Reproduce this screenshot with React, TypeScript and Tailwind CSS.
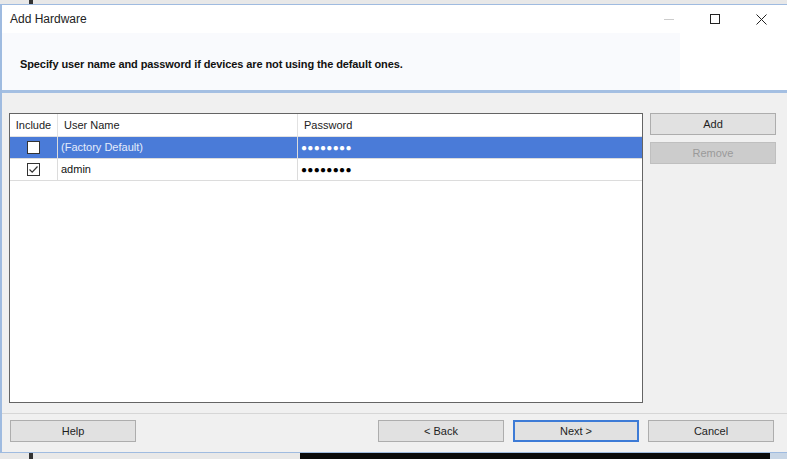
import React from "react";

const font = { fontFamily: '"Liberation Sans", Arial, sans-serif' };

function Checkbox({ checked }: { checked?: boolean }) {
  return (
    <div className="w-[13px] h-[13px] border border-[#333333] bg-white flex items-center justify-center">
      {checked && (
        <svg width="11" height="11" viewBox="0 0 11 11">
          <path d="M1.5 5.5 L4.2 8.2 L9.5 2.5" fill="none" stroke="#333333" strokeWidth="1.2" />
        </svg>
      )}
    </div>
  );
}

function Btn({ label, disabled, primary }: { label: string; disabled?: boolean; primary?: boolean }) {
  return (
    <div
      className={
        "w-[126px] h-[22px] flex items-center justify-center text-[11px] border " +
        (disabled
          ? "bg-[#cccccc] border-[#bfbfbf] text-[#9a9a9a]"
          : primary
          ? "bg-[#e1e1e1] border-[#3d7bd6] border-2 text-[#1e1e1e]"
          : "bg-[#e1e1e1] border-[#adadad] text-[#1e1e1e]")
      }
    >
      {label}
    </div>
  );
}

export default function App() {
  const rows = [
    { user: "(Factory Default)", checked: false, selected: true },
    { user: "admin", checked: true, selected: false },
  ];

  return (
    <div className="w-[787px] h-[459px] flex flex-col bg-[#e8e8e8] overflow-hidden" style={font}>
      {/* desktop strip above */}
      <div className="h-[4px] flex">
        <div className="ml-[29px] w-[4px] bg-[#333333]" />
      </div>

      {/* window */}
      <div className="flex-1 flex flex-col border-t border-l-2 border-b border-[#9fbbe0] bg-[#f0f0f0]">
        {/* header */}
        <div className="bg-white h-[88px] flex flex-col border-b-[3px] border-[#a4bfe2]">
          <div className="h-[28px] flex items-center">
            <div className="pl-[8px] text-[12px] text-[#222222] flex-1">Add Hardware</div>
            <div className="flex items-center h-full">
              <div className="w-[46px] flex justify-center">
                <div className="w-[10px] h-[1px] bg-[#cccccc]" />
              </div>
              <div className="w-[46px] flex justify-center">
                <div className="w-[10px] h-[10px] border border-[#222222]" />
              </div>
              <div className="w-[46px] flex justify-center mr-[3px]">
                <svg width="11" height="11" viewBox="0 0 11 11">
                  <path d="M0.5 0.5 L10.5 10.5 M10.5 0.5 L0.5 10.5" stroke="#222222" strokeWidth="1" />
                </svg>
              </div>
            </div>
          </div>
          <div className="flex-1 flex">
            <div className="w-[678px] bg-[#f9fafd] pl-[18px] pt-[18px]">
              <span className="text-[11px] font-bold text-[#111111] tracking-[-0.1px]">
                Specify user name and password if devices are not using the default ones.
              </span>
            </div>
          </div>
        </div>

        {/* body */}
        <div className="flex gap-[7px] pl-[7px] pt-[20px]">
          <div className="w-[634px] h-[290px] border border-[#646464] bg-white text-[11px]">
            <div className="flex h-[23px] border-b border-[#e2e2e2] text-[#222222]">
              <div className="w-[48px] flex items-center justify-center border-r border-[#e2e2e2]">Include</div>
              <div className="w-[240px] flex items-center pl-[6px] border-r border-[#e2e2e2]">User Name</div>
              <div className="flex-1 flex items-center pl-[6px]">Password</div>
            </div>
            {rows.map((r) => (
              <div
                key={r.user}
                className={
                  "flex h-[22px] border-b border-[#dcdcdc] " +
                  (r.selected ? "bg-[#4a7bd8] text-[#e4ecfb]" : "bg-white text-[#111111]")
                }
              >
                <div className="w-[48px] flex items-center justify-center border-r border-[#dcdcdc]">
                  <Checkbox checked={r.checked} />
                </div>
                <div className="w-[240px] flex items-center pl-[3px] border-r border-[#dcdcdc]">{r.user}</div>
                <div
                  className={
                    "flex-1 flex items-center pl-[3px] text-[10px] tracking-[0.3px] " +
                    (r.selected ? "text-white" : "text-black")
                  }
                >
                  ●●●●●●●●
                </div>
              </div>
            ))}
          </div>
          <div className="flex flex-col gap-[7px]">
            <Btn label="Add" />
            <Btn label="Remove" disabled />
          </div>
        </div>

        {/* footer */}
        <div className="mt-[10px] border-t border-[#d6d6d6] h-[1px] bg-[#fafafa]" />
        <div className="flex items-start pl-[8px] pt-[6px]">
          <Btn label="Help" />
          <div className="ml-[242px] flex gap-[9px]">
            <Btn label="< Back" />
            <Btn label="Next >" primary />
            <Btn label="Cancel" />
          </div>
        </div>
      </div>

      {/* desktop strip below */}
      <div className="h-[6px] flex">
        <div className="ml-[29px] w-[4px] bg-[#333333]" />
        <div className="ml-[267px] w-[470px] bg-[#0a0a0a]" />
        <div className="flex-1 bg-[#c8d6e6]" />
      </div>
    </div>
  );
}
